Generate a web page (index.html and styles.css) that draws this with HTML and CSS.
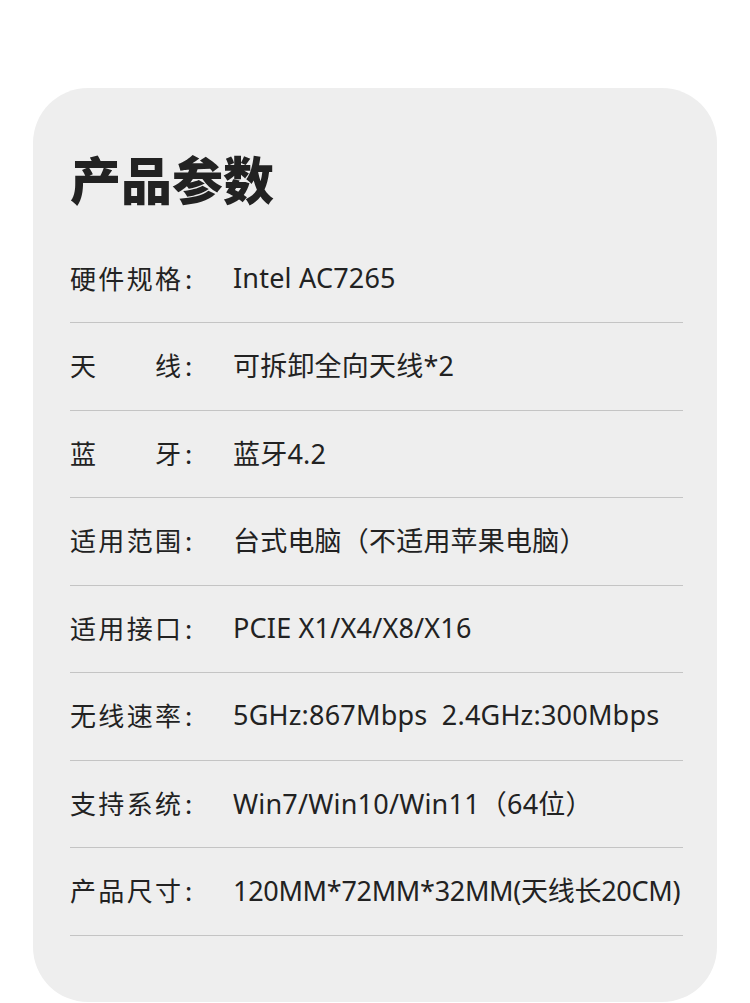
FILE: index.html
```html
<!DOCTYPE html>
<html lang="zh-CN">
<head>
    <meta charset="UTF-8">
    <meta name="viewport" content="width=device-width, initial-scale=1.0">
    <title>产品参数</title>
    <link rel="stylesheet" href="styles.css">
</head>
<body>

<div class="card">
    <h2>产品参数</h2>
    <div class="spec-list">
        <div class="row"><span class="label">硬件规格</span><span class="colon">:</span><span class="value">Intel AC7265</span></div>
        <div class="row"><span class="label">天线</span><span class="colon">:</span><span class="value">可拆卸全向天线*2</span></div>
        <div class="row"><span class="label">蓝牙</span><span class="colon">:</span><span class="value">蓝牙4.2</span></div>
        <div class="row"><span class="label">适用范围</span><span class="colon">:</span><span class="value">台式电脑（不适用苹果电脑）</span></div>
        <div class="row"><span class="label">适用接口</span><span class="colon">:</span><span class="value">PCIE X1/X4/X8/X16</span></div>
        <div class="row"><span class="label">无线速率</span><span class="colon">:</span><span class="value">5GHz:867Mbps&nbsp; 2.4GHz:300Mbps</span></div>
        <div class="row"><span class="label">支持系统</span><span class="colon">:</span><span class="value">Win7/Win10/Win11（64位）</span></div>
        <div class="row"><span class="label">产品尺寸</span><span class="colon">:</span><span class="value tight">120MM*72MM*32MM(天线长20CM)</span></div>
    </div>
</div>

</body>
</html>
```

FILE: styles.css
```css
body {
    margin: 0;
    background: #ffffff;
    font-family: "Noto Sans CJK SC", "Noto Sans", sans-serif;
    color: #222;
}
.card {
    margin: 88px 33px 0;
    height: 914px;
    padding: 0 34px 0 37px;
    background: #eeeeee;
    border-radius: 55px;
}
h2 {
    margin: 0 0 27.5px;
    padding-top: 60px;
    font-size: 51px;
    line-height: 60px;
    font-weight: 900;
    color: #222;
}
.row {
    display: flex;
    align-items: center;
    height: 83.5px;
    padding-bottom: 3px;
    border-bottom: 1px solid #c4c4c4;
    font-size: 26px;
}
.label {
    flex-shrink: 0;
    width: 111px;
    text-align: justify;
    text-align-last: justify;
}
.colon {
    flex-shrink: 0;
    width: 48px;
    padding-left: 4px;
}
.value {
    font-family: "Noto Sans", "Noto Sans CJK SC", sans-serif;
    font-size: 27px;
    letter-spacing: 0.2px;
    white-space: nowrap;
}
.value.tight {
    letter-spacing: -0.3px;
}
```
